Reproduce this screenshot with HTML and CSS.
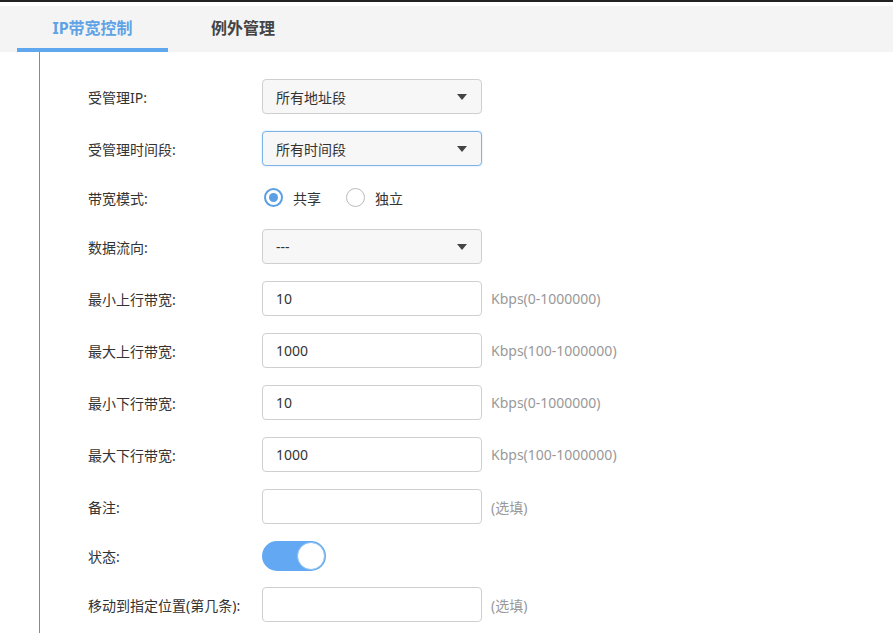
FILE: index.html
```html
<!DOCTYPE html>
<html lang="zh-CN">
<head>
<meta charset="utf-8">
<title>IP带宽控制</title>
<link rel="stylesheet" href="styles.css">
</head>
<body>
<div class="topbar"></div>
<div class="tabs">
  <div class="tab active">IP带宽控制</div>
  <div class="tab">例外管理</div>
</div>
<div class="main">
  <div class="row">
    <div class="label">受管理IP:</div>
    <div class="select"><span>所有地址段</span><i class="arrow"></i></div>
  </div>
  <div class="row">
    <div class="label">受管理时间段:</div>
    <div class="select focus"><span>所有时间段</span><i class="arrow"></i></div>
  </div>
  <div class="row short">
    <div class="label">带宽模式:</div>
    <div class="radios">
      <span class="radio on"></span><span class="rtext">共享</span>
      <span class="radio"></span><span class="rtext">独立</span>
    </div>
  </div>
  <div class="row">
    <div class="label">数据流向:</div>
    <div class="select"><span>---</span><i class="arrow"></i></div>
  </div>
  <div class="row">
    <div class="label">最小上行带宽:</div>
    <div class="input">10</div>
    <div class="hint">Kbps(0-1000000)</div>
  </div>
  <div class="row">
    <div class="label">最大上行带宽:</div>
    <div class="input">1000</div>
    <div class="hint">Kbps(100-1000000)</div>
  </div>
  <div class="row">
    <div class="label">最小下行带宽:</div>
    <div class="input">10</div>
    <div class="hint">Kbps(0-1000000)</div>
  </div>
  <div class="row">
    <div class="label">最大下行带宽:</div>
    <div class="input">1000</div>
    <div class="hint">Kbps(100-1000000)</div>
  </div>
  <div class="row">
    <div class="label">备注:</div>
    <div class="input"></div>
    <div class="hint">(选填)</div>
  </div>
  <div class="row short">
    <div class="label">状态:</div>
    <div class="toggle"><span class="knob"></span></div>
  </div>
  <div class="row">
    <div class="label">移动到指定位置(第几条):</div>
    <div class="input"></div>
    <div class="hint">(选填)</div>
  </div>
</div>
</body>
</html>
```

FILE: styles.css
```css
* { box-sizing: border-box; }
html, body { margin: 0; padding: 0; background: #fff; }
body {
  font-family: "Noto Sans", "Noto Sans CJK SC", sans-serif;
  font-size: 14px;
  color: #333;
  height: 633px;
  overflow: hidden;
}
.topbar { height: 2px; background: #222; }
.tabs {
  margin-top: 4px;
  height: 46px;
  background: #f4f4f4;
  display: flex;
}
.tab {
  font-size: 16px;
  font-weight: bold;
  color: #444;
  display: flex;
  align-items: center;
  height: 46px;
  border-bottom: 4px solid transparent;
  padding-left: 43px;
  padding-bottom: 1px;
}
.tab.active {
  margin-left: 17px;
  width: 151px;
  padding-left: 0;
  justify-content: center;
  color: #5fa3e6;
  border-bottom-color: #5fa8ef;
}
.main {
  margin-left: 39px;
  border-left: 1px solid #8a8a8a;
  padding: 27px 0 0 48px;
  height: 581px;
}
.row {
  display: flex;
  align-items: center;
  height: 35px;
  margin-bottom: 17px;
}
.row.short { height: 29px; }
.label { width: 174px; color: #333; white-space: nowrap; }
.select, .input {
  width: 220px;
  height: 35px;
  border: 1px solid #cfcfcf;
  border-radius: 4px;
  padding: 0 13px;
  display: flex;
  align-items: center;
  color: #333;
}
.select { background: #f7f7f7; justify-content: space-between; }
.select.focus { border-color: #7db4e6; box-shadow: 0 0 2px rgba(100,160,230,0.4); }
.arrow {
  width: 0; height: 0;
  border-left: 5px solid transparent;
  border-right: 5px solid transparent;
  border-top: 6px solid #444;
  margin-right: 1px;
}
.input { background: #fff; }
.hint { margin-left: 9px; color: #999; }
.radios { display: flex; align-items: center; }
.radio {
  width: 19px; height: 19px;
  border-radius: 50%;
  border: 1px solid #bbb;
  background: #fff;
  margin-left: 2px;
  position: relative;
}
.radio.on { border: 2px solid #5b9fe4; }
.radio.on::after {
  content: "";
  position: absolute;
  left: 3px; top: 3px;
  width: 9px; height: 9px;
  border-radius: 50%;
  background: #5b9fe4;
}
.rtext { margin-left: 10px; margin-right: 23px; }
.toggle {
  width: 64px; height: 30px;
  border-radius: 15px;
  background: #62a8f2;
  display: flex;
  align-items: center;
  justify-content: flex-end;
  padding-right: 1px;
}
.knob {
  width: 28px; height: 28px;
  border-radius: 50%;
  background: #fff;
  border: 1px solid #8fc0ef;
}
```
